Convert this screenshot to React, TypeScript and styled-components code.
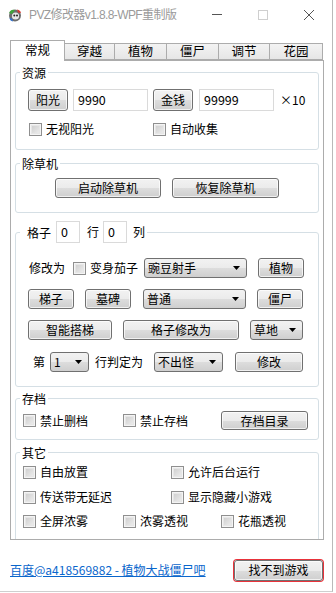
import React from "react";
import styled, { createGlobalStyle } from "styled-components";

const Global = createGlobalStyle`
  html, body { margin: 0; padding: 0; background: #fff; }
  body {
    font-family: "Noto Sans CJK SC", "Microsoft YaHei", sans-serif;
    font-size: 12px;
    color: #000;
  }
  * { box-sizing: border-box; }
`;

const Window = styled.div`
  width: 333px;
  height: 592px;
  border-right: 1px solid #b9b9b9;
  border-bottom: 1px solid #cfcfcf;
  display: flex;
  flex-direction: column;
  background: #fff;
  overflow: hidden;
`;

const TitleBar = styled.div`
  height: 29px;
  display: flex;
  align-items: center;
  padding-left: 8px;
  flex-shrink: 0;
`;

const TitleText = styled.span`
  margin-left: 7px;
  font-family: "Liberation Sans", "Noto Sans CJK SC", sans-serif;
  font-size: 12px;
  letter-spacing: -0.6px;
  color: #9a9a9a;
  line-height: 1;
  white-space: nowrap;
  flex-shrink: 0;
`;

const Controls = styled.div`
  margin-left: auto;
  display: flex;
  height: 29px;
  flex-shrink: 0;
`;

const Ctrl = styled.div`
  width: 46px;
  height: 29px;
  display: flex;
  align-items: center;
  justify-content: center;
`;

const MinLine = styled.span`
  display: block;
  width: 10px;
  height: 1px;
  background: #555;
`;

const TabStrip = styled.div`
  margin-top: 11px;
  padding-left: 10px;
  height: 21px;
  display: flex;
  align-items: flex-start;
  position: relative;
  z-index: 1;
  margin-bottom: -1px;
  flex-shrink: 0;
`;

const Tab = styled.div<{ $w: number; $active?: boolean }>`
  width: ${(p) => p.$w}px;
  height: ${(p) => (p.$active ? 21 : 17)}px;
  margin-top: ${(p) => (p.$active ? 0 : 3)}px;
  border: 1px solid #acacac;
  border-bottom: ${(p) => (p.$active ? "none" : "1px solid #acacac")};
  border-left: ${(p) => (p.$active ? "1px solid #acacac" : "none")};
  background: ${(p) =>
    p.$active ? "#fff" : "linear-gradient(#f3f3f3, #e6e6e6)"};
  display: flex;
  align-items: center;
  justify-content: center;
  font-size: 12.5px;
  line-height: 1;
  padding-bottom: ${(p) => (p.$active ? 2 : 0)}px;
`;

const Panel = styled.div`
  margin-left: 10px;
  width: 314px;
  height: 480px;
  border: 1px solid #acacac;
  padding: 3px 4px 0 4px;
  display: flex;
  flex-direction: column;
  overflow: hidden;
  flex-shrink: 0;
`;

const Group = styled.fieldset<{ $mt?: number }>`
  margin: ${(p) => p.$mt ?? 0}px 0 0 0;
  padding: 0;
  min-width: 0;
  border: 1px solid #d5dfe5;
  border-radius: 3px;
  flex-shrink: 0;
`;

const Legend = styled.legend<{ $pl?: number }>`
  margin-left: 4px;
  padding: 0 2px 0 ${(p) => p.$pl ?? 2}px;
  line-height: 17px;
  font-size: 12px;
  display: flex;
  align-items: center;
`;

const Body = styled.div<{ $pt: number; $pb: number; $pl: number }>`
  padding: ${(p) => p.$pt}px 0 ${(p) => p.$pb}px ${(p) => p.$pl}px;
  display: flex;
  flex-direction: column;
`;

const Row = styled.div<{ $mt?: number; $h?: number; $center?: boolean }>`
  display: flex;
  align-items: center;
  height: ${(p) => p.$h ?? 20}px;
  margin-top: ${(p) => p.$mt ?? 0}px;
  justify-content: ${(p) => (p.$center ? "center" : "flex-start")};
`;

const CheckGrid = styled.div<{ $cols: string; $mt?: number; $h?: number }>`
  display: grid;
  grid-template-columns: ${(p) => p.$cols};
  align-items: center;
  height: ${(p) => p.$h ?? 16}px;
  margin-top: ${(p) => p.$mt ?? 0}px;
`;

const Btn = styled.button<{ $w: number; $h?: number; $ml?: number; $alert?: boolean }>`
  width: ${(p) => p.$w}px;
  height: ${(p) => p.$h ?? 20}px;
  margin-left: ${(p) => p.$ml ?? 0}px;
  padding: 0;
  font: inherit;
  font-size: 12px;
  line-height: 1;
  color: #000;
  border: 1px solid #707070;
  border-radius: 3px;
  background: linear-gradient(#f2f2f2 0%, #ebebeb 50%, #dddddd 50%, #cfcfcf 100%);
  box-shadow: ${(p) =>
    p.$alert
      ? "inset 0 0 0 1px rgba(255,255,255,0.7), 0 0 0 1px #e8323a"
      : "inset 0 0 0 1px rgba(255,255,255,0.7)"};
  display: flex;
  align-items: center;
  justify-content: center;
  flex-shrink: 0;
`;

const Combo = styled.div<{ $w: number; $ml?: number }>`
  width: ${(p) => p.$w}px;
  height: 20px;
  margin-left: ${(p) => p.$ml ?? 0}px;
  border: 1px solid #707070;
  border-radius: 3px;
  background: linear-gradient(#f2f2f2 0%, #ebebeb 50%, #dddddd 50%, #cfcfcf 100%);
  display: flex;
  align-items: center;
  justify-content: space-between;
  padding: 0 6px 0 3px;
  line-height: 1;
  flex-shrink: 0;
`;

const TextBox = styled.div<{ $w: number; $h?: number; $ml?: number }>`
  width: ${(p) => p.$w}px;
  height: ${(p) => p.$h ?? 22}px;
  margin-left: ${(p) => p.$ml ?? 0}px;
  border: 1px solid #dadada;
  background: #fff;
  padding-left: 4px;
  display: flex;
  align-items: center;
  font-size: 12.5px;
  line-height: 1;
  flex-shrink: 0;
`;

const Txt = styled.span<{ $ml?: number }>`
  margin-left: ${(p) => p.$ml ?? 0}px;
  line-height: 1;
  white-space: nowrap;
  flex-shrink: 0;
`;

const CheckLabel = styled.label<{ $ml?: number }>`
  display: flex;
  align-items: center;
  gap: 4px;
  margin-left: ${(p) => p.$ml ?? 0}px;
  line-height: 1;
  white-space: nowrap;
`;

const Box = styled.span`
  width: 13px;
  height: 13px;
  border: 1px solid #8f8f8f;
  background: linear-gradient(135deg, #c9c9c9, #f2f2f2);
  box-shadow: inset 0 0 0 1px #f4f4f4, inset 0 0 0 2px #e6e6e6;
  flex-shrink: 0;
`;

const Footer = styled.div`
  margin-top: 19px;
  margin-left: 10px;
  width: 314px;
  height: 22px;
  display: flex;
  align-items: center;
  justify-content: space-between;
  padding-right: 1px;
`;

const Link = styled.a`
  color: #0a66cc;
  text-decoration: underline;
  line-height: 1;
  font-size: 12px;
  cursor: pointer;
`;

const Arrow = () => (
  <svg width="7" height="4" viewBox="0 0 7 4">
    <path d="M0 0H7L3.5 4Z" fill="#000" />
  </svg>
);

const Check = ({ label, ml }: { label: string; ml?: number }) => (
  <CheckLabel $ml={ml}>
    <Box />
    {label}
  </CheckLabel>
);

const AppIcon = () => (
  <svg width="14" height="14" viewBox="0 0 14 14">
    <circle cx="7" cy="7.5" r="6" fill="#6d6d6d" />
    <circle cx="7.5" cy="8" r="3.6" fill="#e7e7e7" />
    <circle cx="6.3" cy="7.4" r="1" fill="#222" />
    <circle cx="9" cy="7.6" r="1" fill="#222" />
    <path d="M1 5 Q3 0.5 7 2 L4 6 Z" fill="#3ea33a" />
    <path d="M9 1.5 Q12.5 2 13 5 L10 4.5 Z" fill="#d8342c" />
    <path d="M1.5 10 Q2 13 5 13.5 L4 10.5 Z" fill="#2d6fd1" />
  </svg>
);

export default function App() {
  return (
    <>
      <Global />
      <Window>
        <TitleBar>
          <AppIcon />
          <TitleText>PVZ修改器v1.8.8-WPF重制版</TitleText>
          <Controls>
            <Ctrl>
              <MinLine />
            </Ctrl>
            <Ctrl>
              <svg width="10" height="10" viewBox="0 0 10 10">
                <rect x="0.5" y="0.5" width="9" height="9" fill="none" stroke="#cfcfcf" />
              </svg>
            </Ctrl>
            <Ctrl>
              <svg width="10" height="10" viewBox="0 0 10 10">
                <path d="M0 0L10 10M10 0L0 10" stroke="#555" strokeWidth="1" />
              </svg>
            </Ctrl>
          </Controls>
        </TitleBar>

        <TabStrip>
          <Tab $w={55} $active>常规</Tab>
          <Tab $w={50}>穿越</Tab>
          <Tab $w={52}>植物</Tab>
          <Tab $w={52}>僵尸</Tab>
          <Tab $w={51}>调节</Tab>
          <Tab $w={53}>花园</Tab>
        </TabStrip>

        <Panel>
          <Group>
            <Legend>资源</Legend>
            <Body $pt={8} $pb={13} $pl={12}>
              <Row $h={22}>
                <Btn $w={40} $h={22}>阳光</Btn>
                <TextBox $w={75} $ml={5}>9990</TextBox>
                <Btn $w={40} $h={22} $ml={5}>金钱</Btn>
                <TextBox $w={75} $ml={6}>99999</TextBox>
                <Txt $ml={6}>×10</Txt>
              </Row>
              <CheckGrid $cols="125px auto" $mt={11} $h={14}>
                <Check label="无视阳光" ml={1} />
                <Check label="自动收集" />
              </CheckGrid>
            </Body>
          </Group>

          <Group $mt={5}>
            <Legend>除草机</Legend>
            <Body $pt={6} $pb={14} $pl={0}>
              <Row $center>
                <Btn $w={106}>启动除草机</Btn>
                <Btn $w={107} $ml={11}>恢复除草机</Btn>
              </Row>
            </Body>
          </Group>

          <Group $mt={8}>
            <Legend $pl={7}>
              格子
              <TextBox $w={24} $ml={5}>0</TextBox>
              <Txt $ml={7}>行</Txt>
              <TextBox $w={24} $ml={4}>0</TextBox>
              <Txt $ml={6}>列</Txt>
            </Legend>
            <Body $pt={15} $pb={14} $pl={12}>
              <Row>
                <Txt $ml={1}>修改为</Txt>
                <CheckLabel $ml={8}>
                  <Box />
                  变身茄子
                </CheckLabel>
                <Combo $w={103} $ml={6}>
                  豌豆射手
                  <Arrow />
                </Combo>
                <Btn $w={46} $ml={11}>植物</Btn>
              </Row>
              <Row $mt={11}>
                <Btn $w={46}>梯子</Btn>
                <Btn $w={46} $ml={11}>墓碑</Btn>
                <Combo $w={103} $ml={12}>
                  普通
                  <Arrow />
                </Combo>
                <Btn $w={46} $ml={11}>僵尸</Btn>
              </Row>
              <Row $mt={11}>
                <Btn $w={84}>智能搭梯</Btn>
                <Btn $w={116} $ml={11}>格子修改为</Btn>
                <Combo $w={53} $ml={11}>
                  草地
                  <Arrow />
                </Combo>
              </Row>
              <Row $mt={12}>
                <Txt $ml={5}>第</Txt>
                <Combo $w={39} $ml={5}>
                  1
                  <Arrow />
                </Combo>
                <Txt $ml={6}>行判定为</Txt>
                <Combo $w={69} $ml={11}>
                  不出怪
                  <Arrow />
                </Combo>
                <Btn $w={68} $ml={12}>修改</Btn>
              </Row>
            </Body>
          </Group>

          <Group $mt={3}>
            <Legend>存档</Legend>
            <Body $pt={4} $pb={9} $pl={7}>
              <CheckGrid $cols="100px 98px auto" $h={19}>
                <Check label="禁止删档" />
                <Check label="禁止存档" />
                <Btn $w={87} $h={19}>存档目录</Btn>
              </CheckGrid>
            </Body>
          </Group>

          <Group $mt={4}>
            <Legend>其它</Legend>
            <Body $pt={3} $pb={14} $pl={7}>
              <CheckGrid $cols="148px auto">
                <Check label="自由放置" />
                <Check label="允许后台运行" />
              </CheckGrid>
              <CheckGrid $cols="148px auto" $mt={9}>
                <Check label="传送带无延迟" />
                <Check label="显示隐藏小游戏" />
              </CheckGrid>
              <CheckGrid $cols="100px 98px auto" $mt={8}>
                <Check label="全屏浓雾" />
                <Check label="浓雾透视" />
                <Check label="花瓶透视" />
              </CheckGrid>
            </Body>
          </Group>
        </Panel>

        <Footer>
          <Link>百度@a418569882 - 植物大战僵尸吧</Link>
          <Btn $w={89} $h={21} $alert>找不到游戏</Btn>
        </Footer>
      </Window>
    </>
  );
}
